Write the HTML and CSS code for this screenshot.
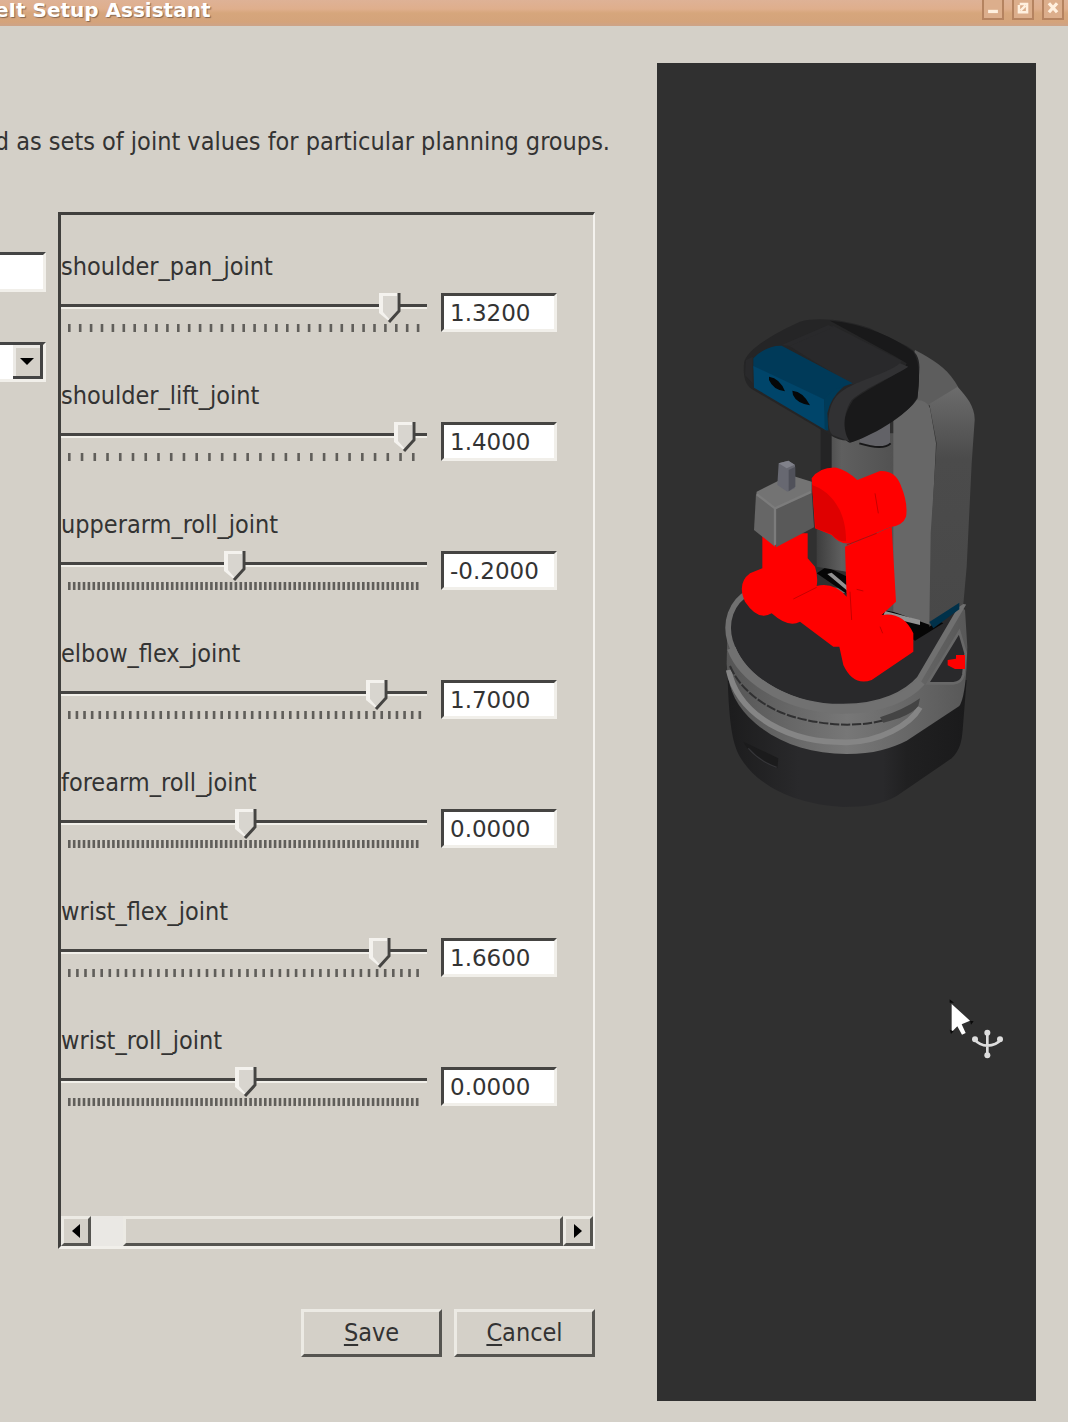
FILE: index.html
```html
<!DOCTYPE html>
<html lang="en">
<head>
<meta charset="utf-8">
<title>MoveIt Setup Assistant</title>
<link rel="stylesheet" href="styles.css">
</head>
<body>
<header class="titlebar">
  <h1 class="title">eIt Setup Assistant</h1>
  <div class="window-buttons">
    <button class="window-button" aria-label="Minimize"><svg viewBox="0 0 22 22"><path d="M5 14H17" stroke-width="4"/></svg></button>
    <button class="window-button" aria-label="Maximize"><svg viewBox="0 0 22 22"><path d="M7 5H16V15H6V6M8 13L14 7" stroke-width="3"/></svg></button>
    <button class="window-button" aria-label="Close"><svg viewBox="0 0 22 22"><path d="M6 4L16 15M16 4L6 15" stroke-width="4"/></svg></button>
  </div>
</header>
<main class="window">
  <section class="editor">
    <p class="intro">d as sets of joint values for particular planning groups.</p>
    <div class="columns">
      <form class="pose">
        <input class="pose-name" type="text" aria-label="Pose name">
        <select class="pose-group" aria-label="Planning group"><option></option></select>
      </form>
      <div class="panel">
        <div class="joints">
          <div class="joint">
            <label class="joint-name" for="j1">shoulder_pan_joint</label>
            <div class="slider">
              <input class="range" id="j1" type="range" min="0" max="1000" value="924">
              <svg class="ticks" viewBox="0 0 366 8" preserveAspectRatio="none"><path d="M7 4H360" stroke-dasharray="2.6 8.3"/></svg>
            </div>
            <input class="value" type="text" value="1.3200" aria-label="shoulder_pan_joint value">
          </div>
          <div class="joint">
            <label class="joint-name" for="j2">shoulder_lift_joint</label>
            <div class="slider">
              <input class="range" id="j2" type="range" min="0" max="1000" value="968">
              <svg class="ticks" viewBox="0 0 366 8" preserveAspectRatio="none"><path d="M7 4H360" stroke-dasharray="2.6 10.14"/></svg>
            </div>
            <input class="value" type="text" value="1.4000" aria-label="shoulder_lift_joint value">
          </div>
          <div class="joint">
            <label class="joint-name" for="j3">upperarm_roll_joint</label>
            <div class="slider">
              <input class="range" id="j3" type="range" min="0" max="1000" value="474">
              <svg class="ticks" viewBox="0 0 366 8" preserveAspectRatio="none"><path d="M7 4H359" stroke-dasharray="2.6 2.3"/></svg>
            </div>
            <input class="value" type="text" value="-0.2000" aria-label="upperarm_roll_joint value">
          </div>
          <div class="joint">
            <label class="joint-name" for="j4">elbow_flex_joint</label>
            <div class="slider">
              <input class="range" id="j4" type="range" min="0" max="1000" value="887">
              <svg class="ticks" viewBox="0 0 366 8" preserveAspectRatio="none"><path d="M7 4H361" stroke-dasharray="2.6 5.02"/></svg>
            </div>
            <input class="value" type="text" value="1.7000" aria-label="elbow_flex_joint value">
          </div>
          <div class="joint">
            <label class="joint-name" for="j5">forearm_roll_joint</label>
            <div class="slider">
              <input class="range" id="j5" type="range" min="0" max="1000" value="506">
              <svg class="ticks" viewBox="0 0 366 8" preserveAspectRatio="none"><path d="M7 4H359" stroke-dasharray="2.6 2.3"/></svg>
            </div>
            <input class="value" type="text" value="0.0000" aria-label="forearm_roll_joint value">
          </div>
          <div class="joint">
            <label class="joint-name" for="j6">wrist_flex_joint</label>
            <div class="slider">
              <input class="range" id="j6" type="range" min="0" max="1000" value="895">
              <svg class="ticks" viewBox="0 0 366 8" preserveAspectRatio="none"><path d="M7 4H360" stroke-dasharray="2.6 5.5"/></svg>
            </div>
            <input class="value" type="text" value="1.6600" aria-label="wrist_flex_joint value">
          </div>
          <div class="joint">
            <label class="joint-name" for="j7">wrist_roll_joint</label>
            <div class="slider">
              <input class="range" id="j7" type="range" min="0" max="1000" value="506">
              <svg class="ticks" viewBox="0 0 366 8" preserveAspectRatio="none"><path d="M7 4H359" stroke-dasharray="2.6 2.3"/></svg>
            </div>
            <input class="value" type="text" value="0.0000" aria-label="wrist_roll_joint value">
          </div>
        </div>
        <div class="scrollbar">
          <button class="scroll-button" aria-label="Scroll left"><svg viewBox="0 0 12 14"><path d="M10 0V14L2 7Z"/></svg></button>
          <div class="scroll-gap"></div>
          <div class="scroll-thumb"></div>
          <button class="scroll-button" aria-label="Scroll right"><svg viewBox="0 0 12 14"><path d="M2 0V14L10 7Z"/></svg></button>
        </div>
      </div>
    </div>
    <div class="actions">
      <button class="action"><u>S</u>ave</button>
      <button class="action"><u>C</u>ancel</button>
    </div>
  </section>
  <section class="viewer" aria-label="Robot view">
    <svg class="robot" viewBox="0 0 900 1560">
      <defs>
        <linearGradient id="base" x1="0" x2="1"><stop offset="0" stop-color="#1c1c1d"/><stop offset=".3" stop-color="#29292b"/><stop offset=".65" stop-color="#29292b"/><stop offset=".75" stop-color="#202021"/><stop offset="1" stop-color="#1a1a1b"/></linearGradient>
        <linearGradient id="ring" x1="0" x2="1"><stop offset="0" stop-color="#555"/><stop offset=".5" stop-color="#777"/><stop offset="1" stop-color="#585858"/></linearGradient>
        <linearGradient id="side" x1="0" y1="0" x2="0" y2="1"><stop offset="0" stop-color="#6c6c6c"/><stop offset=".3" stop-color="#4b4b4b"/><stop offset="1" stop-color="#484848"/></linearGradient>
        <linearGradient id="column" x1="0" x2="1"><stop offset="0" stop-color="#3d3d3d"/><stop offset=".3" stop-color="#5f5f5f"/><stop offset="1" stop-color="#505050"/></linearGradient>
      </defs>
      <!-- mobile base -->
      <path fill="url(#base)" d="M82 1100C85 1230 92 1310 112 1355C155 1450 280 1515 430 1521C500 1521 550 1512 590 1488L755 1375C780 1350 785 1325 788 1290L800 1140Z"/>
      <path fill="#1b1b1c" d="M130 1325L235 1375L232 1405C190 1390 150 1365 130 1325Z"/>
      <path fill="none" stroke="#353538" stroke-width="4" d="M145 1345Q180 1385 230 1402"/>
      <path fill="url(#ring)" d="M80 1090C82 1150 100 1205 145 1250C220 1325 320 1360 440 1362C520 1362 575 1345 620 1322L778 1218C795 1190 800 1120 802 1040L795 930L770 910L82 1000Z"/>
      <path fill="none" stroke="#858585" stroke-width="17" d="M86 1110C100 1180 140 1230 210 1272C285 1315 355 1327 440 1327C540 1325 630 1275 660 1222"/>
      <path fill="none" stroke="#303031" stroke-width="6" stroke-dasharray="28 5" d="M90 1098C120 1170 200 1230 290 1253C400 1282 500 1280 580 1252"/>
      <path fill="#444" d="M550 1268Q630 1250 655 1218L660 1195Q610 1230 540 1252Z"/>
      <path fill="#29292b" stroke="#707070" stroke-width="17" d="M150 875C90 905 75 970 90 1022C130 1150 285 1222 430 1220C545 1220 620 1180 658 1137L785 920L500 870Z"/>
      <path fill="none" stroke="#717171" stroke-width="26" d="M94 1045C135 1155 290 1228 430 1228C545 1228 625 1190 664 1145"/>
      <path fill="#29292b" stroke="#686868" stroke-width="8" d="M778 995L683 1150H760Q785 1148 790 1125L797 1060Z"/>
      <path fill="red" d="M743 1080L768 1076V1065H795V1107H765L743 1096Z"/>
      <path fill="#060606" d="M350 820L380 800L730 970L645 1022Z"/>
      <!-- torso -->
      <path fill="#242425" d="M362 380H400V520H362Z"/>
      <path fill="url(#column)" d="M395 400H600V940L550 930L440 880V815L350 800V640L395 510Z"/>
      <path fill="#5d5d5d" d="M645 150C700 180 735 200 765 245L775 262L690 315L585 360Z"/>
      <path fill="#676767" d="M580 350L650 300Q680 300 690 325L708 430L695 700L690 975L580 935Z"/>
      <path fill="url(#side)" d="M688 312L773 260C800 290 825 320 824 360L815 490L800 800L790 912L688 980L692 700L710 430Z"/>
      <path fill="#929292" d="M555 933L660 960V975L550 948ZM382 822L395 818L442 858V872Z"/>
      <path fill="#00314a" d="M688 966L778 908V928L700 985Z"/>
      <path fill="#626267" d="M480 410L570 360V435L545 442L480 428Z"/>
      <path fill="none" stroke="#171718" stroke-width="6" d="M478 430Q550 452 572 430"/>
      <!-- head -->
      <path fill="#252526" d="M132 190C135 155 210 105 300 65C355 50 440 60 510 85L620 138C650 155 660 175 658 210L653 295C620 350 540 375 500 400C465 425 430 430 390 405L155 267C130 250 130 215 132 190Z"/>
      <path fill="#19191a" d="M390 62C490 70 590 115 640 155C662 190 659 250 652 290C630 345 500 415 450 428C420 420 425 350 460 300C510 260 610 220 620 190L590 172Z"/>
      <path fill="#29292b" d="M268 138L400 78L605 182C600 210 510 238 455 254Z"/>
      <path fill="#313133" d="M600 190C550 230 440 245 405 295C380 330 380 390 398 405L450 425C430 400 425 345 455 300C500 260 590 225 625 200Z"/>
      <path fill="#29292b" d="M245 135L385 75L400 82L270 138ZM138 180L158 170V250L135 225Z"/>
      <path fill="#003a59" d="M160 175Q200 135 245 137L458 250Q420 260 375 300L160 205Z"/>
      <path fill="#00456a" d="M160 198L372 298L380 392L162 263Z"/>
      <path fill="#003b59" d="M372 298Q395 268 430 260Q390 295 382 340L385 392L374 388Z"/>
      <path fill="#050708" d="M207 230Q240 235 255 274Q220 270 207 240ZM277 272Q310 275 330 316Q290 310 279 285Z"/>
      <!-- arm -->
      <path fill="red" d="M187 700H323V775L345 800Q355 830 350 858Q400 845 440 890L435 740L575 680L588 905L545 945Q610 935 640 1000V1055L515 1140Q460 1160 430 1095L418 1040L400 1040L300 965Q265 985 215 940Q175 965 135 905Q110 850 150 820L187 805Z"/>
      <path fill="red" d="M335 535Q360 500 410 503Q440 510 472 540L540 513Q585 510 602 555Q625 610 618 650Q610 675 570 682L460 727Q425 740 395 705L345 685Z"/>
      <path fill="#df0000" d="M336 555C385 570 440 625 438 724Q415 725 394 702L347 685Z"/>
      <path fill="none" stroke="#c70000" stroke-width="3" d="M525 580L535 640M440 735L530 700M280 897L350 862M450 875L455 960M540 980L548 1000M470 868L490 873"/>
      <!-- gripper -->
      <path fill="#737373" d="M170 575L270 525L335 545V580L230 630L168 590Z"/>
      <path fill="#666" d="M168 582L225 628V740L162 690Z"/>
      <path fill="#595959" d="M225 628L335 574L342 682L228 742Z"/>
      <path fill="none" stroke="#7c7c7c" stroke-width="7" stroke-linecap="round" d="M173 585L225 625L330 577M225 627V732"/>
      <path fill="#676871" d="M236 490L265 482L285 495V565L262 575L232 555Z"/>
      <path fill="#80818a" d="M236 490L265 482L284 494L260 505Z"/>
      <path fill="#50515a" d="M266 510L286 500V560L266 574Z"/>
    </svg>
    <svg class="cursor" viewBox="0 0 180 195">
      <path fill="#fff" d="M20 18V102L37 85L51 110L62 105L50 79L75 68Z"/>
      <path fill="#080808" d="M14 4L27 14H14ZM75 68L86 70L78 80ZM14 95L26 100L18 108Z"/>
      <g fill="none" stroke="#ddd" stroke-width="8"><path d="M127 106V175M88 124Q104 142 127 143Q154 142 168 124"/></g>
      <g fill="#ddd"><circle cx="127" cy="104" r="9"/><circle cx="127" cy="172" r="9"/><circle cx="90" cy="124" r="9"/><circle cx="165" cy="124" r="9"/></g>
    </svg>
  </section>
</main>
</body>
</html>
```
FILE: styles.css
```css
* { box-sizing: border-box; }
body {
  margin: 0;
  min-height: 100vh;
  display: flex;
  flex-direction: column;
  overflow-x: hidden;
  background: #d4d0c8;
  color: #333;
  font-family: "DejaVu Sans Condensed", "DejaVu Sans", sans-serif;
  font-size: 25px;
  line-height: 28px;
}
button, input, select { font: inherit; color: inherit; margin: 0; }
.titlebar {
  height: 26px;
  display: flex;
  justify-content: space-between;
  align-items: flex-start;
  padding-right: 4px;
  background: linear-gradient(#deb296, #dfae8c 35%, #d6a67c 50%, #d4a37b 85%, #cda388);
}
.title {
  margin: 0 0 0 -5px;
  color: #fff;
  font: bold 20px/20px "DejaVu Sans", sans-serif;
  text-shadow: 1px 1px 1px #846650;
  white-space: nowrap;
}
.window-buttons { display: flex; gap: 8px; }
.window-button {
  width: 22px;
  height: 20px;
  padding: 0;
  border: 2px solid #b58360;
  border-top: 0;
  background: #dcae8c;
}
.window-button svg { display: block; width: 18px; height: 18px; fill: none; stroke: #fff0df; }
.window {
  flex: 1;
  display: grid;
  grid-template-columns: minmax(0, 1fr) 379px;
  gap: 47px;
  padding: 37px 32px 21px 0;
}
.editor { display: flex; flex-direction: column; padding-bottom: 44px; }
.intro {
  display: flex;
  justify-content: flex-end;
  margin: 65px 0 56px;
  overflow: hidden;
  white-space: nowrap;
}
.columns {
  flex: 1;
  display: grid;
  grid-template-columns: 46px minmax(0, 1fr);
  gap: 12px;
  padding-right: 15px;
}
.pose { display: flex; flex-direction: column; gap: 50px; padding-top: 40px; }
.pose-name, .pose-group {
  width: 46px;
  height: 40px;
  padding: 0;
  border: solid #f1efea;
  border-width: 3px 3px 3px 0;
  border-top-color: #444;
  border-radius: 0;
  background: #fff;
}
.pose-group {
  appearance: none;
  background: #fff url("data:image/svg+xml,%3Csvg xmlns='http://www.w3.org/2000/svg' width='30' height='34'%3E%3Cpath fill='%23d4d0c8' d='M0 0H30V34H0Z'/%3E%3Cpath fill='%23eceae6' d='M0 0H27V3H3V31H0Z'/%3E%3Cpath fill='%23444' d='M27 0H30V34H0V31H27Z'/%3E%3Cpath d='M7 13H21L14 20Z'/%3E%3C/svg%3E") right center no-repeat;
}
.panel {
  display: flex;
  flex-direction: column;
  justify-content: space-between;
  border: 3px solid #403f3d;
  border-right: 2px solid #f4f2ee;
  border-bottom-color: #f1efea;
}
.joints { padding-top: 38px; }
.joint {
  display: grid;
  grid-template-columns: minmax(0, 1fr) 116px;
  gap: 12px 14px;
  padding-right: 36px;
  margin-bottom: 50px;
}
.joint-name { grid-column: 1 / -1; }
.slider { display: flex; flex-direction: column; gap: 1px; }
.range {
  appearance: none;
  width: 100%;
  height: 30px;
  background: linear-gradient(transparent 11px, #454442 11px 14px, #f1efe9 14px 16px, transparent 16px);
}
.range::-webkit-slider-thumb {
  appearance: none;
  width: 22px;
  height: 30px;
  background: url("data:image/svg+xml,%3Csvg xmlns='http://www.w3.org/2000/svg' width='22' height='30'%3E%3Cpath fill='%23f4f2ee' d='M0 0H20V20L11 29L0 20Z'/%3E%3Cpath fill='%23d8d5cf' d='M4 3H18V20L11 27L4 19Z'/%3E%3Cpath fill='none' stroke='%23454442' stroke-width='3' d='M20 0V18L10 29'/%3E%3C/svg%3E");
}
.ticks { width: 100%; height: 8px; fill: none; stroke: #605e5a; stroke-width: 8px; }
.value {
  width: 100%;
  height: 39px;
  padding: 0 0 0 6px;
  border: 3px solid #454442;
  border-right-color: #f1efea;
  border-bottom-color: #f1efea;
  border-radius: 0;
  background: #fff;
  font-family: "DejaVu Sans", sans-serif;
  font-size: 23px;
}
.scrollbar {
  display: grid;
  grid-template-columns: 30px 32px 1fr 30px;
  height: 30px;
}
.scroll-button, .scroll-thumb, .action {
  border: 3px solid #555450;
  border-top-color: #eceae4;
  border-left-color: #eceae4;
  background: #d4d0c8;
}
.scroll-button { padding: 0; }
.scroll-button svg { display: block; width: 12px; height: 14px; margin: auto; }
.scroll-gap { background: #eae8e4; }
.actions { display: flex; justify-content: flex-end; gap: 12px; padding: 60px 15px 0 0; }
.action { width: 141px; height: 48px; padding: 0; }
.action u { text-underline-offset: 3px; }
.viewer { position: relative; background: #303030; padding: 237px 0 0 43px; }
.robot { display: block; width: 300px; height: 520px; }
.cursor { position: absolute; left: 288px; top: 935px; width: 60px; height: 65px; }
```
